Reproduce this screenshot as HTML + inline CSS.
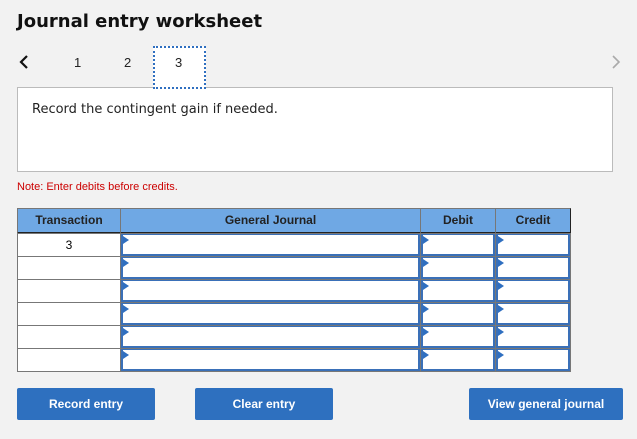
<!DOCTYPE html>
<html><head><style>
body{margin:0;width:637px;height:439px;background:#f2f2f2;font-family:"Liberation Sans",Arial,sans-serif;position:relative;overflow:hidden}
.a{position:absolute}
h1{position:absolute;left:17px;top:11px;margin:0;font-size:18px;font-weight:bold;font-family:"DejaVu Sans","Liberation Sans",sans-serif;color:#111}
.tab{position:absolute;top:55px;font-size:13px;color:#222}
.cell{position:absolute;border:1px solid #777;box-sizing:border-box;background:#fff}
.hd{position:absolute;top:208px;height:26px;background:#6fa8e4;border:1px solid #777;border-right:1px solid #222;box-sizing:border-box;font-size:12px;font-weight:bold;color:#222;text-align:center;line-height:23px;border-bottom:2px solid #222}
.in{position:absolute;background:#fff;border:2px solid #3a70b8;border-top-width:1px;box-sizing:border-box}
.in:before{content:"";position:absolute;left:0;top:1px;border-left:6px solid #2f6fc0;border-top:4px solid transparent;border-bottom:4px solid transparent}
.btn{position:absolute;top:388px;height:32px;background:#2e70bf;border-radius:2px;color:#fff;font-size:12px;font-weight:bold;text-align:center;line-height:32px}
</style></head><body>
<h1>Journal entry worksheet</h1>
<svg class="a" style="left:18px;top:54px" width="12" height="16"><path d="M9 2 L3 8 L9 14" stroke="#111" stroke-width="2.2" fill="none"/></svg>
<div class="tab" style="left:74px">1</div>
<div class="tab" style="left:124px">2</div>
<div class="a" style="left:153px;top:46px;width:53px;height:43px;background:#fff;border:2px dotted #2f6fc0;box-sizing:border-box;z-index:2"></div>
<div class="tab" style="left:175px;z-index:3">3</div>
<svg class="a" style="left:610px;top:54px" width="12" height="16"><path d="M3 2 L9 8 L3 14" stroke="#aaa" stroke-width="1.6" fill="none"/></svg>
<div class="a" style="left:17px;top:87px;width:596px;height:85px;background:#fff;border:1px solid #bbb;box-sizing:border-box"></div>
<div class="a" style="left:32px;top:102px;color:#222;font-family:'DejaVu Sans','Liberation Sans',sans-serif;font-size:13px">Record the contingent gain if needed.</div>
<div class="a" style="left:17px;top:181px;font-size:11px;color:#c00">Note: Enter debits before credits.</div>
<div class="hd" style="left:17px;width:104px">Transaction</div>
<div class="hd" style="left:120px;width:301px">General Journal</div>
<div class="hd" style="left:420px;width:76px">Debit</div>
<div class="hd" style="left:495px;width:76px">Credit</div>
<div class="a" style="left:17px;top:233px;width:554px;height:139px;background:#777"></div>
<div class="cell" style="left:17px;top:233px;width:104px;height:24px;text-align:center;font-size:12px;line-height:22px">3</div>
<div class="cell" style="left:17px;top:256px;width:104px;height:24px"></div>
<div class="cell" style="left:17px;top:279px;width:104px;height:24px"></div>
<div class="cell" style="left:17px;top:302px;width:104px;height:24px"></div>
<div class="cell" style="left:17px;top:325px;width:104px;height:24px"></div>
<div class="cell" style="left:17px;top:348px;width:104px;height:24px"></div>
<div class="in" style="left:121px;top:234px;width:299px;height:22px"></div>
<div class="in" style="left:421px;top:234px;width:74px;height:22px"></div>
<div class="in" style="left:496px;top:234px;width:74px;height:22px"></div>
<div class="in" style="left:121px;top:257px;width:299px;height:22px"></div>
<div class="in" style="left:421px;top:257px;width:74px;height:22px"></div>
<div class="in" style="left:496px;top:257px;width:74px;height:22px"></div>
<div class="in" style="left:121px;top:280px;width:299px;height:22px"></div>
<div class="in" style="left:421px;top:280px;width:74px;height:22px"></div>
<div class="in" style="left:496px;top:280px;width:74px;height:22px"></div>
<div class="in" style="left:121px;top:303px;width:299px;height:22px"></div>
<div class="in" style="left:421px;top:303px;width:74px;height:22px"></div>
<div class="in" style="left:496px;top:303px;width:74px;height:22px"></div>
<div class="in" style="left:121px;top:326px;width:299px;height:22px"></div>
<div class="in" style="left:421px;top:326px;width:74px;height:22px"></div>
<div class="in" style="left:496px;top:326px;width:74px;height:22px"></div>
<div class="in" style="left:121px;top:349px;width:299px;height:22px"></div>
<div class="in" style="left:421px;top:349px;width:74px;height:22px"></div>
<div class="in" style="left:496px;top:349px;width:74px;height:22px"></div>
<div class="btn" style="left:17px;width:138px">Record entry</div>
<div class="btn" style="left:195px;width:138px">Clear entry</div>
<div class="btn" style="left:469px;width:154px">View general journal</div>
</body></html>
